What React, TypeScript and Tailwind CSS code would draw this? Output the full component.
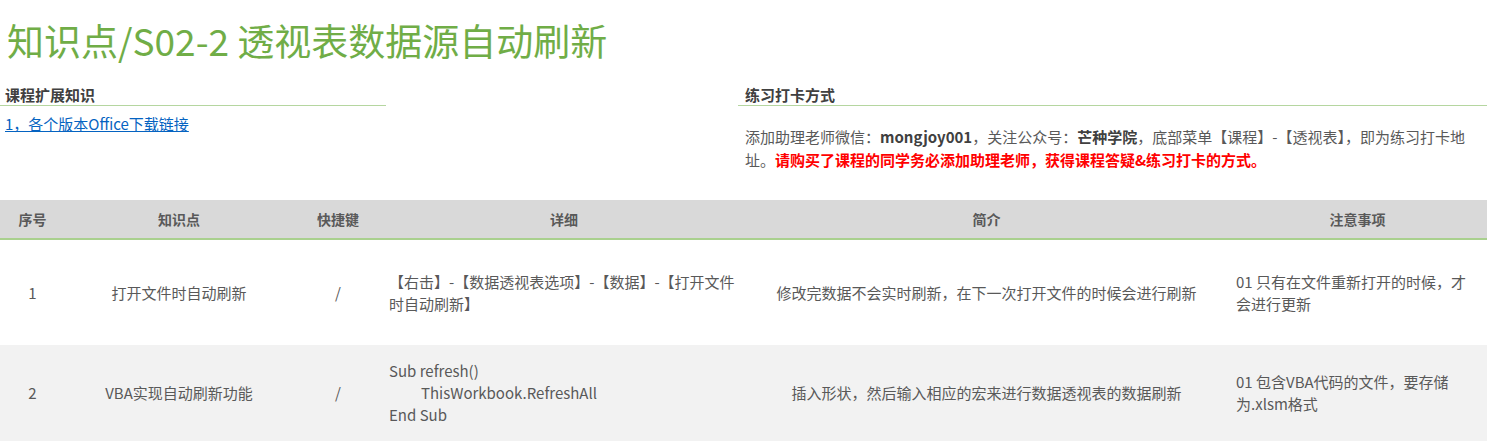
export default function App() {
  const cols = "grid grid-cols-[65px_228px_90px_362px_483px_259px]";
  return (
    <div className="w-[1487px] h-[443px] overflow-hidden bg-white text-[#595959] font-['Noto_Sans_CJK_SC','Noto_Sans',sans-serif]">
      <h1 className="h-[80px] flex items-center pl-[7px] text-[37px] leading-none font-normal text-[#70ad47]">
        知识点/S02-2 透视表数据源自动刷新
      </h1>
      <div className="flex h-[120px]">
        <div className="w-[386px]">
          <div className="mt-[5px] h-[21px] border-b border-[#b5d6a0] pl-[5px] text-[15px] font-bold leading-[19px] text-[#404040]">
            课程扩展知识
          </div>
          <a href="#" className="block mt-[7px] pl-[5px] text-[15px] leading-[22px] text-[#0563c1] underline">
            1，各个版本Office下载链接
          </a>
        </div>
        <div className="ml-auto w-[749px]">
          <div className="mt-[5px] h-[21px] border-b border-[#b5d6a0] pl-[7px] text-[15px] font-bold leading-[19px] text-[#404040]">
            练习打卡方式
          </div>
          <p className="mt-[19px] pl-[7px] w-[735px] text-[15px] leading-[23px] text-[#595959]">
            添加助理老师微信：<b className="text-[#404040]">mongjoy001</b>，关注公众号：<b className="text-[#404040]">芒种学院</b>，底部菜单【课程】-【透视表】，即为练习打卡地址。
            <b className="text-[#ff0000]">请购买了课程的同学务必添加助理老师，获得课程答疑&amp;练习打卡的方式。</b>
          </p>
        </div>
      </div>
      <div className={`${cols} h-[40px] bg-[#d9d9d9] border-b-2 border-[#a9d08e] items-center text-[14px] font-bold text-[#595959]`}>
        <div className="text-center">序号</div>
        <div className="text-center">知识点</div>
        <div className="text-center">快捷键</div>
        <div className="text-center">详细</div>
        <div className="text-center">简介</div>
        <div className="text-center">注意事项</div>
      </div>
      <div className={`${cols} h-[105px] items-center text-[15px] leading-[22px]`}>
        <div className="text-center">1</div>
        <div className="text-center">打开文件时自动刷新</div>
        <div className="text-center">/</div>
        <div className="pl-[6px] pr-[4px]">【右击】-【数据透视表选项】-【数据】-【打开文件时自动刷新】</div>
        <div className="text-center">修改完数据不会实时刷新，在下一次打开文件的时候会进行刷新</div>
        <div className="pl-[8px] pr-[13px]">01 只有在文件重新打开的时候，才会进行更新</div>
      </div>
      <div className={`${cols} h-[96px] items-center bg-[#f2f2f2] text-[15px] leading-[22px]`}>
        <div className="text-center">2</div>
        <div className="text-center">VBA实现自动刷新功能</div>
        <div className="text-center">/</div>
        <div className="pl-[6px] pr-[4px]">
          <div>Sub refresh()</div>
          <div className="pl-[32px]">ThisWorkbook.RefreshAll</div>
          <div>End Sub</div>
        </div>
        <div className="text-center">插入形状，然后输入相应的宏来进行数据透视表的数据刷新</div>
        <div className="pl-[8px] pr-[13px]">01 包含VBA代码的文件，要存储为.xlsm格式</div>
      </div>
    </div>
  );
}
